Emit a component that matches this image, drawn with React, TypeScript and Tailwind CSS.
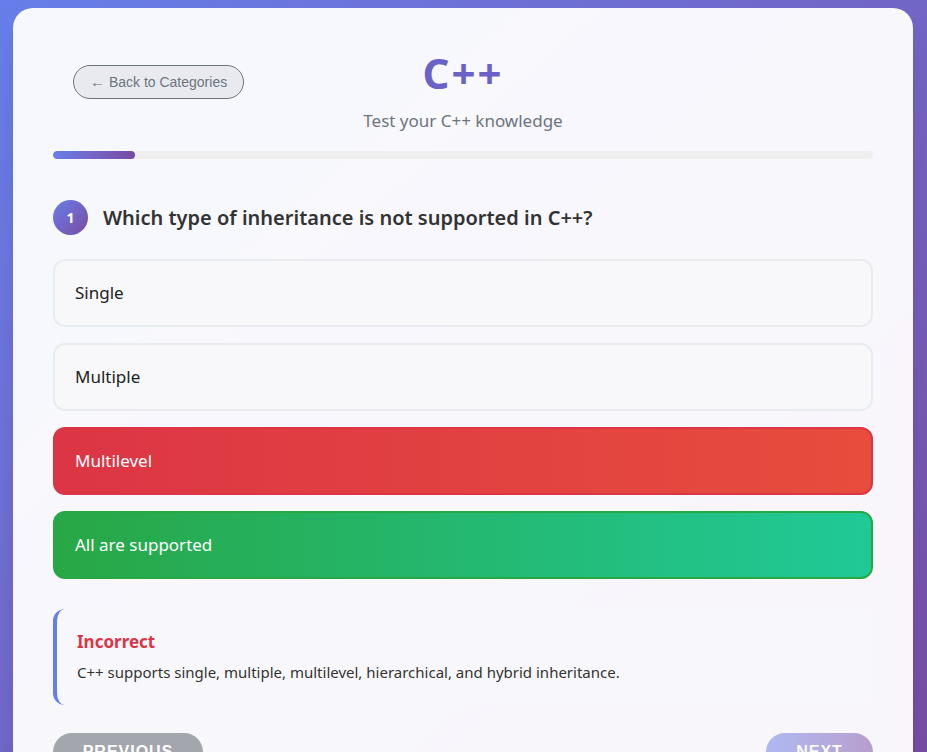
import React from "react";

const options = [
  { label: "Single", state: "idle" },
  { label: "Multiple", state: "idle" },
  { label: "Multilevel", state: "wrong" },
  { label: "All are supported", state: "right" },
];

const optionClass: Record<string, string> = {
  idle: "bg-[#f8f8fb] border-[#e9ecef] text-[#222]",
  wrong: "bg-gradient-to-r from-[#dc3545] to-[#e74c3c] border-[#dc3545] text-white",
  right: "bg-gradient-to-r from-[#28a745] to-[#20c997] border-[#28a745] text-white",
};

export default function App() {
  return (
    <div
      className="min-h-screen bg-gradient-to-br from-[#667eea] to-[#764ba2] pt-2 pl-[13px]"
      style={{ fontFamily: '"Noto Sans", "Open Sans", sans-serif' }}
    >
      <div className="w-[900px] bg-white/95 rounded-[20px] px-10 pt-10 pb-10 shadow-xl">
        {/* header */}
        <div className="relative text-center">
          <button
            className="absolute left-5 top-[17px] h-[34px] px-[16px] rounded-full border border-[#6c757d] bg-[#e9eaef] text-[#6c757d] text-[14px]"
            style={{ fontFamily: '"Liberation Sans", Arial, sans-serif' }}
          >
            <span className="text-[15px]">←</span> Back to Categories
          </button>
          <h1 className="text-[42px] leading-[50px] font-bold tracking-[2px] text-[#6b62c8]">C++</h1>
          <p className="mt-[11px] text-[17px] leading-[23px] text-[#6c757d]">Test your C++ knowledge</p>
        </div>

        {/* progress */}
        <div className="mt-[19px] h-2 rounded-full bg-[#efefef] overflow-hidden">
          <div className="h-full w-[10%] rounded-full bg-gradient-to-r from-[#667eea] to-[#764ba2]" />
        </div>

        {/* question */}
        <div className="mt-[41px] flex items-center gap-[15px]">
          <div className="w-[35px] h-[35px] rounded-full bg-gradient-to-br from-[#667eea] to-[#764ba2] flex items-center justify-center text-white text-[14px] font-bold">
            1
          </div>
          <h2 className="text-[20px] font-semibold text-[#333]">
            Which type of inheritance is not supported in C++?
          </h2>
        </div>

        <div className="mt-6 flex flex-col gap-4">
          {options.map((o) => (
            <div
              key={o.label}
              className={`h-[68px] flex items-center px-5 rounded-xl border-2 text-[17px] ${optionClass[o.state]}`}
            >
              {o.label}
            </div>
          ))}
        </div>

        {/* feedback */}
        <div className="mt-[30px] rounded-xl border-l-4 border-[#667eea] bg-[#f8f8fc] px-5 pt-5 pb-[22px]">
          <div className="text-[17px] leading-[26px] font-bold text-[#dc3545]">Incorrect</div>
          <p className="mt-[6px] text-[15px] leading-[22px] text-[#333]">
            C++ supports single, multiple, multilevel, hierarchical, and hybrid inheritance.
          </p>
        </div>

        {/* nav */}
        <div
          className="mt-7 flex justify-between"
          style={{ fontFamily: '"Liberation Sans", Arial, sans-serif' }}
        >
          <button className="w-[150px] h-[38px] rounded-full bg-[#a3a7ad] text-white font-bold text-[16px] uppercase tracking-[1px]">
            Previous
          </button>
          <button className="w-[107px] h-[38px] rounded-full bg-gradient-to-r from-[#667eea] to-[#764ba2] opacity-50 text-white font-bold text-[16px] uppercase tracking-[1px]">
            Next
          </button>
        </div>
      </div>
    </div>
  );
}
